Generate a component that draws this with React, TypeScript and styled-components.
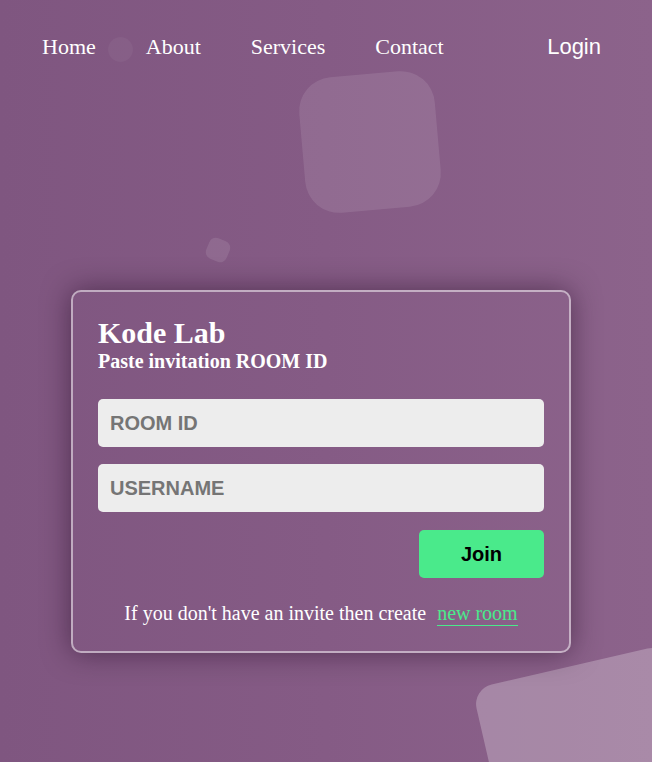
import React from "react";
import styled, { createGlobalStyle } from "styled-components";

const Global = createGlobalStyle`
  html, body { margin: 0; padding: 0; }
  body {
    min-height: 762px;
    background: linear-gradient(90deg, #7f5680 0%, #855b85 50%, #8c638b 100%);
    font-family: "Liberation Serif", "Times New Roman", serif;
    overflow: hidden;
  }
  * { box-sizing: border-box; }
`;

const Page = styled.div`
  position: relative;
  min-height: 762px;
  overflow: hidden;
`;

const Shape = styled.div<{ $x: number; $y: number; $w: number; $r: number; $rot: number; $a: number }>`
  position: absolute;
  left: ${(p) => p.$x}px;
  top: ${(p) => p.$y}px;
  width: ${(p) => p.$w}px;
  height: ${(p) => p.$w}px;
  border-radius: ${(p) => p.$r}px;
  transform: rotate(${(p) => p.$rot}deg);
  background: rgba(255, 255, 255, ${(p) => p.$a});
  pointer-events: none;
`;

const Nav = styled.nav`
  position: relative;
  height: 94px;
  display: flex;
  align-items: center;
  gap: 50px;
  padding: 0 51px 0 42px;
`;

const NavLink = styled.a`
  color: #fff;
  font-size: 22px;
  text-decoration: none;
  font-family: "Liberation Serif", serif;
`;

const LoginLink = styled.a`
  margin-left: auto;
  color: #fff;
  font-size: 22px;
  text-decoration: none;
  font-family: "Liberation Sans", Arial, sans-serif;
`;

const Main = styled.main`
  position: relative;
  padding: 196px 0 0 71px;
`;

const Card = styled.div`
  width: 500px;
  padding: 24px 25px 26px;
  border: 2px solid rgba(255, 255, 255, 0.5);
  border-radius: 10px;
  box-shadow: 0 0 28px rgba(30, 5, 30, 0.5);
  display: flex;
  flex-direction: column;
`;

const Title = styled.h1`
  margin: 0;
  font-size: 30px;
  font-weight: bold;
  color: #fff;
`;

const Subtitle = styled.h2`
  margin: 0 0 26px;
  font-size: 20px;
  font-weight: bold;
  color: #fff;
`;

const Input = styled.input`
  width: 100%;
  height: 48px;
  border: none;
  border-radius: 5px;
  background: #ededed;
  padding: 0 12px;
  font-family: "Liberation Sans", Arial, sans-serif;
  font-size: 20px;
  font-weight: bold;
  color: #333;
  outline: none;
  margin-bottom: 17px;
  &::placeholder { color: #757575; }
`;

const Actions = styled.div`
  display: flex;
  justify-content: flex-end;
  margin-top: 1px;
`;

const JoinButton = styled.button`
  width: 125px;
  height: 48px;
  border: none;
  border-radius: 5px;
  background: #4aea8b;
  color: #000;
  font-family: "Liberation Sans", Arial, sans-serif;
  font-size: 20px;
  font-weight: bold;
  cursor: pointer;
`;

const Footer = styled.p`
  margin: 24px 0 0;
  text-align: center;
  color: #fff;
  font-size: 20px;
`;

const NewRoom = styled.a`
  margin-left: 6px;
  padding-bottom: 1px;
  color: #4aea8b;
  text-decoration: none;
  border-bottom: 1px solid #4aea8b;
`;

export default function App() {
  return (
    <>
      <Global />
      <Page>
        <Shape $x={108} $y={37} $w={25} $r={12.5} $rot={0} $a={0.045} />
        <Shape $x={302} $y={74} $w={136} $r={34} $rot={-5} $a={0.1} />
        <Shape $x={207} $y={239} $w={22} $r={7} $rot={22} $a={0.1} />
        <Shape $x={492} $y={664} $w={200} $r={20} $rot={-13} $a={0.25} />
        <Nav>
          <NavLink href="#">Home</NavLink>
          <NavLink href="#">About</NavLink>
          <NavLink href="#">Services</NavLink>
          <NavLink href="#">Contact</NavLink>
          <LoginLink href="#">Login</LoginLink>
        </Nav>
        <Main>
          <Card>
            <Title>Kode Lab</Title>
            <Subtitle>Paste invitation ROOM ID</Subtitle>
            <Input placeholder="ROOM ID" />
            <Input placeholder="USERNAME" />
            <Actions>
              <JoinButton>Join</JoinButton>
            </Actions>
            <Footer>
              If you don't have an invite then create <NewRoom href="#">new room</NewRoom>
            </Footer>
          </Card>
        </Main>
      </Page>
    </>
  );
}
